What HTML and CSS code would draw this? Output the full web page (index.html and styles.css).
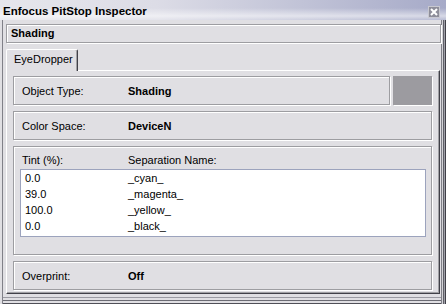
FILE: index.html
```html
<!DOCTYPE html>
<html>
<head>
<meta charset="utf-8">
<link rel="stylesheet" href="styles.css">
</head>
<body>
<div class="window">
  <div class="titlebar">
    <span class="title">Enfocus PitStop Inspector</span>
    <span class="close">
      <svg width="12" height="12" viewBox="0 0 12 12">
        <rect x="0.5" y="0.5" width="11" height="11" fill="#8e8e9a" stroke="#c8c8d0"/>
        <path d="M3 3 L9 9 M9 3 L3 9" stroke="#ffffff" stroke-width="2"/>
      </svg>
    </span>
  </div>
  <div class="frame">
    <div class="header">Shading</div>
    <div class="tabs"><div class="tab">EyeDropper</div></div>
    <div class="panel">
      <div class="top-row">
        <div class="box field obj"><span class="label">Object Type:</span><span class="value">Shading</span></div>
        <div class="swatch"></div>
      </div>
      <div class="box field"><span class="label">Color Space:</span><span class="value">DeviceN</span></div>
      <div class="box tint">
        <div class="tint-head"><span class="label">Tint (%):</span><span>Separation Name:</span></div>
        <div class="list">
          <div class="row"><span class="num">0.0</span><span>_cyan_</span></div>
          <div class="row"><span class="num">39.0</span><span>_magenta_</span></div>
          <div class="row"><span class="num">100.0</span><span>_yellow_</span></div>
          <div class="row"><span class="num">0.0</span><span>_black_</span></div>
        </div>
      </div>
      <div class="box field"><span class="label">Overprint:</span><span class="value">Off</span></div>
    </div>
  </div>
</div>
</body>
</html>
```
FILE: styles.css
```css
html, body {
  margin: 0;
  padding: 0;
}
body {
  width: 446px;
  height: 304px;
  overflow: hidden;
  background: #e0dfe3;
  font-family: "Liberation Sans", Arial, sans-serif;
  font-size: 11px;
  color: #000;
}
.window {
  width: 446px;
  height: 304px;
  display: flex;
  flex-direction: column;
}
.titlebar {
  height: 20px;
  flex: none;
  display: flex;
  align-items: flex-start;
  padding-left: 3px;
  box-sizing: border-box;
  background:
    linear-gradient(to bottom, rgba(255,255,255,0) 40%, rgba(255,255,255,0.55) 80%, rgba(255,255,255,0.2) 100%),
    linear-gradient(to right, #e6e6ec 0%, #dcdce6 35%, #a6aac8 100%);
}
.title {
  font-weight: bold;
  font-size: 11.5px;
  line-height: 14px;
  margin-top: 4px;
}
.close {
  margin-left: auto;
  margin-right: 6px;
  margin-top: 6px;
  width: 12px;
  height: 12px;
  display: block;
}
.close svg {
  display: block;
}
.frame {
  flex: 1;
  box-sizing: border-box;
  padding: 4px 5px 0 3px;
  box-shadow:
    inset 2px 0 0 #e0dfe3,
    inset 3px 0 0 #808088,
    inset -1px 0 0 #404048,
    inset -2px 0 0 #a0a0a8,
    inset -3px 0 0 #606068,
    inset -4px 0 0 #d4d4d8,
    inset -5px 0 0 #808088,
    inset 0 -1px 0 #505058,
    inset 0 -3px 0 #e0dfe3,
    inset 0 -4px 0 #6c6c74,
    inset 0 -6px 0 #e0dfe3,
    inset 0 -7px 0 #9a9aa2;
}
.header {
  margin-left: 3px;
  height: 19px;
  box-sizing: border-box;
  border: 1px solid #9d9da1;
  box-shadow: inset 1px 1px 0 #fff, 1px 1px 0 #fff;
  font-weight: bold;
  line-height: 17px;
  padding-left: 4px;
}
.tabs {
  margin-top: 6px;
  margin-left: 3px;
  display: flex;
  position: relative;
  z-index: 1;
}
.tab {
  width: 72px;
  height: 22px;
  box-sizing: border-box;
  margin-bottom: -1px;
  background: #e0dfe3;
  border-top: 1px solid #fff;
  border-left: 1px solid #fff;
  border-right: 1px solid #404048;
  box-shadow: inset -1px 0 0 #a0a0a4;
  border-radius: 2px 2px 0 0;
  padding-left: 7px;
  line-height: 19px;
}
.panel {
  margin-left: 3px;
  width: 434px;
  height: 224px;
  box-sizing: border-box;
  border-top: 1px solid #fff;
  border-left: 1px solid #fff;
  border-right: 1px solid #404048;
  border-bottom: 1px solid #404048;
  box-shadow: inset -1px -1px 0 #a0a0a4;
  padding: 5px 7px 0 6px;
  display: flex;
  flex-direction: column;
  gap: 6px;
}
.top-row {
  display: flex;
  gap: 3px;
}
.box {
  box-sizing: border-box;
  border: 1px solid #9d9da1;
  box-shadow: inset 1px 1px 0 #fff, 1px 1px 0 #fff;
}
.field {
  height: 29px;
  display: flex;
  align-items: center;
  padding-left: 8px;
}
.obj {
  width: 377px;
}
.swatch {
  width: 39px;
  height: 29px;
  background: #9c9ba0;
  box-shadow: 1px 1px 0 #fff;
}
.label {
  width: 106px;
  flex: none;
}
.value {
  font-weight: bold;
}
.tint {
  height: 109px;
  padding: 7px 5px 0 6px;
}
.tint-head {
  display: flex;
  line-height: 13px;
  padding-left: 2px;
}
.list {
  margin-top: 2px;
  height: 68px;
  box-sizing: border-box;
  background: #fff;
  border: 1px solid #9ca3bd;
  padding: 0 0 2px 4px;
}
.row {
  display: flex;
  height: 16px;
  line-height: 16px;
}
.num {
  width: 103px;
  flex: none;
}
```
